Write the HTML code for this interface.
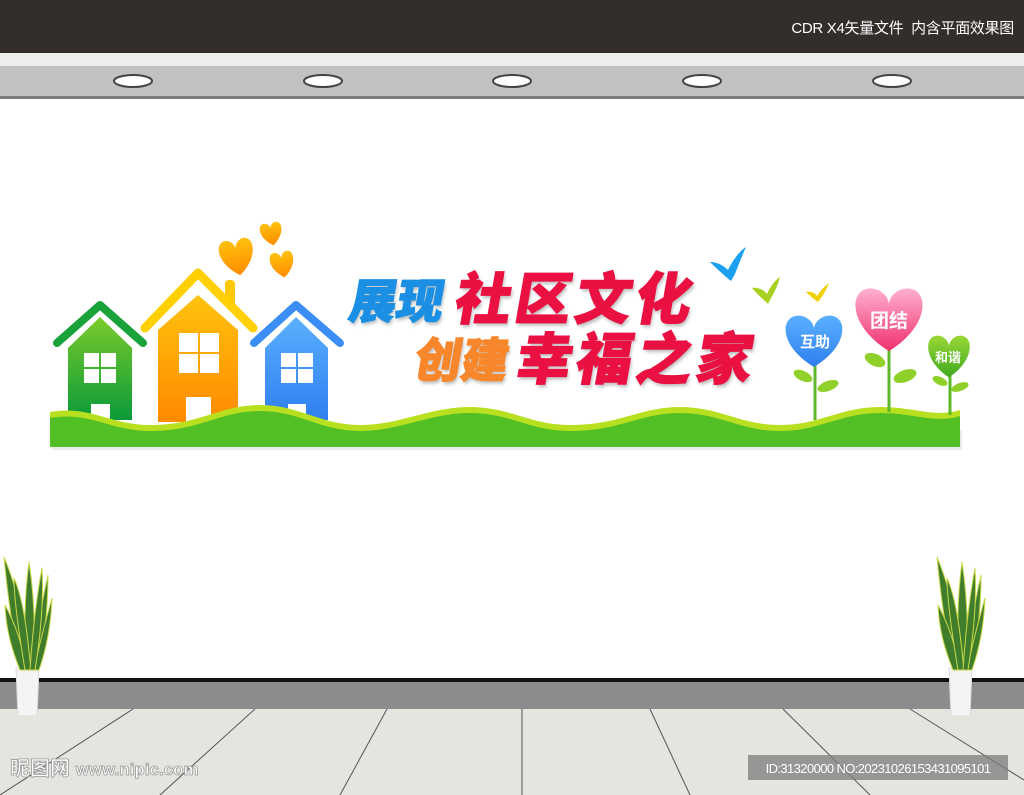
<!DOCTYPE html>
<html><head><meta charset="utf-8"><style>
*{margin:0;padding:0}
body{width:1024px;height:795px;position:relative;overflow:hidden;background:#fff;font-family:"Liberation Sans","Noto Sans CJK SC",sans-serif}
.t{position:absolute;white-space:nowrap;font-family:"Liberation Sans","Noto Sans CJK SC",sans-serif;font-weight:900;transform:skewX(-10deg);text-shadow:2px 3px 3px rgba(0,0,0,.25);line-height:1;-webkit-text-stroke:1.2px currentColor}
</style></head><body>
<div style="position:absolute;left:0;top:0;width:1024px;height:53px;background:#332d2b"></div>
<div style="position:absolute;right:10px;top:17px;color:#fff;font-size:15px;letter-spacing:-0.3px">CDR X4矢量文件&nbsp; 内含平面效果图</div>
<div style="position:absolute;left:0;top:53px;width:1024px;height:13px;background:#eceeed"></div>
<div style="position:absolute;left:0;top:66px;width:1024px;height:31px;background:#c1c1c1"></div>
<div style="position:absolute;left:0;top:96px;width:1024px;height:3px;background:#7a7a7a"></div>
<svg style="position:absolute;left:0;top:0" width="1024" height="795">
<g fill="#fff" stroke="#444" stroke-width="2">
<ellipse cx="133" cy="81" rx="19" ry="6"/><ellipse cx="323" cy="81" rx="19" ry="6"/><ellipse cx="512" cy="81" rx="19" ry="6"/><ellipse cx="702" cy="81" rx="19" ry="6"/><ellipse cx="892" cy="81" rx="19" ry="6"/></g>
<rect x="0" y="678" width="1024" height="4" fill="#111"/>
<rect x="0" y="682" width="1024" height="27" fill="#8c8c8c"/>
<rect x="0" y="709" width="1024" height="86" fill="#e3e6df"/>
<g stroke="#555" stroke-width="1">
<line x1="133" y1="709" x2="0" y2="795"/><line x1="255" y1="709" x2="160" y2="795"/><line x1="387" y1="709" x2="340" y2="795"/><line x1="522" y1="709" x2="522" y2="795"/><line x1="650" y1="709" x2="690" y2="795"/><line x1="783" y1="709" x2="870" y2="795"/><line x1="910" y1="709" x2="1024" y2="780"/></g>
<defs>
<linearGradient id="gg" x1="0" y1="0" x2="0" y2="1"><stop offset="0" stop-color="#7acb2a"/><stop offset="1" stop-color="#0a9a3a"/></linearGradient>
<linearGradient id="og" x1="0" y1="0" x2="0" y2="1"><stop offset="0" stop-color="#ffc20e"/><stop offset="1" stop-color="#ff8a00"/></linearGradient>
<linearGradient id="bg" x1="0" y1="0" x2="0" y2="1"><stop offset="0" stop-color="#5ab0ff"/><stop offset="1" stop-color="#2f7ff0"/></linearGradient>
<linearGradient id="pg" x1="0" y1="0" x2="0" y2="1"><stop offset="0" stop-color="#ffb0d0"/><stop offset="1" stop-color="#f0306e"/></linearGradient>
<linearGradient id="lg" x1="0" y1="0" x2="0" y2="1"><stop offset="0" stop-color="#9ad836"/><stop offset="1" stop-color="#3ea820"/></linearGradient>
<path id="heart" d="M0,14 C-30,-2 -28,-24 -13,-24 C-6,-24 0,-19 0,-14 C0,-19 6,-24 13,-24 C28,-24 30,-2 0,14Z"/>
</defs>
<g stroke="#19a23a" stroke-width="8" stroke-linecap="round" stroke-linejoin="round" fill="none"><path d="M57,343 L100,305 L143,343"/></g>
<path d="M68,348 L100,317 L132,348 L132,420 L68,420Z" fill="url(#gg)"/>
<g fill="#fff"><rect x="84" y="353" width="15" height="14"/><rect x="101" y="353" width="15" height="14"/><rect x="84" y="369" width="15" height="14"/><rect x="101" y="369" width="15" height="14"/><rect x="91" y="404" width="19" height="18"/></g>
<rect x="225" y="280" width="10" height="28" rx="4" fill="#ffc800"/>
<g stroke="#ffd000" stroke-width="9" stroke-linecap="round" stroke-linejoin="round" fill="none"><path d="M145,328 L198,273 L253,328"/></g>
<path d="M158,330 L198,295 L238,330 L238,422 L158,422Z" fill="url(#og)"/>
<g fill="#fff"><rect x="179" y="333" width="19" height="19"/><rect x="200" y="333" width="19" height="19"/><rect x="179" y="354" width="19" height="19"/><rect x="200" y="354" width="19" height="19"/><rect x="186" y="397" width="25" height="25"/></g>
<g stroke="#3b8ef5" stroke-width="8" stroke-linecap="round" stroke-linejoin="round" fill="none"><path d="M254,343 L296,305 L340,343"/></g>
<path d="M265,348 L296,317 L328,348 L328,420 L265,420Z" fill="url(#bg)"/>
<g fill="#fff"><rect x="281" y="353" width="15" height="14"/><rect x="298" y="353" width="15" height="14"/><rect x="281" y="369" width="15" height="14"/><rect x="298" y="369" width="15" height="14"/><rect x="288" y="404" width="18" height="18"/></g>
<g fill="url(#og)"><use href="#heart" transform="translate(238,262) rotate(-10) scale(0.72,0.95)"/><use href="#heart" transform="translate(272,237) rotate(-10) scale(0.46,0.6)"/><use href="#heart" transform="translate(283,268) rotate(-10) scale(0.5,0.68)"/></g>
<rect x="52" y="430" width="910" height="20" fill="#000" opacity=".08"/>
<path d="M50,412 C90,405 110,425 150,425 C200,425 220,405 260,405 C300,405 320,425 360,425 C400,425 430,407 470,407 C510,407 530,425 570,425 C620,425 640,407 680,407 C720,407 740,425 780,425 C820,425 840,407 880,407 C915,407 935,418 960,410 L960,447 L50,447Z" fill="#b8e020"/>
<path d="M50,418 C90,411 110,431 150,431 C200,431 220,411 260,411 C300,411 320,431 360,431 C400,431 430,413 470,413 C510,413 530,431 570,431 C620,431 640,413 680,413 C720,413 740,431 780,431 C820,431 840,413 880,413 C915,413 935,424 960,416 L960,447 L50,447Z" fill="#52bf24"/>
<g stroke="#5cb82a" stroke-width="3" fill="none"><line x1="815" y1="360" x2="815" y2="420"/><line x1="889" y1="345" x2="889" y2="412"/><line x1="950" y1="370" x2="950" y2="415"/></g>
<g fill="#8fd12a"><ellipse cx="803" cy="376" rx="10" ry="5" transform="rotate(25 803 376)"/><ellipse cx="828" cy="386" rx="11" ry="5" transform="rotate(-20 828 386)"/><ellipse cx="875" cy="360" rx="11" ry="6" transform="rotate(25 875 360)"/><ellipse cx="905" cy="376" rx="12" ry="6" transform="rotate(-20 905 376)"/><ellipse cx="940" cy="381" rx="8" ry="4" transform="rotate(25 940 381)"/><ellipse cx="960" cy="387" rx="9" ry="4" transform="rotate(-20 960 387)"/></g>
<use href="#heart" fill="url(#bg)" transform="translate(814,348) scale(1.2,1.35)"/>
<use href="#heart" fill="url(#pg)" transform="translate(889,328) scale(1.42,1.65)"/>
<use href="#heart" fill="url(#lg)" transform="translate(949,362) scale(0.88,1.1)"/>
<g font-family="Liberation Sans,Noto Sans CJK SC,sans-serif" font-weight="bold" fill="#fff" text-anchor="middle"><text x="815" y="347" font-size="15">互助</text><text x="889" y="327" font-size="19">团结</text><text x="948" y="362" font-size="13">和谐</text></g>
<g fill="#1ea0f0"><path d="M710,262 C718,262 724,266 728,270 C732,262 738,252 746,247 C742,256 738,266 735,274 L731,281 C726,277 718,270 710,262Z"/></g>
<g fill="#a8d020"><path d="M752,288 C758,287 764,290 767,294 C770,287 775,280 780,277 C778,285 774,293 771,298 L768,304 C764,300 757,294 752,288Z"/></g>
<g fill="#f0d000"><path d="M806,292 C811,291 815,293 817,296 C820,291 825,286 829,283 C826,290 823,296 820,299 L818,302 C814,299 810,296 806,292Z"/></g>
<g id="plant">
<path d="M16,668 L39,668 L37,716 L18,716Z" fill="#f4f4f4" stroke="#ddd"/>
<g fill="#3f7d2c" stroke="#c9d84a" stroke-width="1">
<path d="M22,670 C14,640 8,600 4,557 C18,590 26,630 30,670Z"/>
<path d="M27,670 C24,630 24,600 29,562 C35,600 35,640 33,670Z"/>
<path d="M32,670 C36,640 40,610 48,575 C48,610 44,645 37,670Z"/>
<path d="M20,670 C12,650 6,630 5,605 C16,625 22,645 27,670Z"/>
<path d="M34,670 C40,640 46,620 52,598 C51,625 46,650 39,670Z"/>
<path d="M25,670 C20,640 14,600 14,578 C24,600 28,640 31,670Z"/>
<path d="M30,670 C32,640 36,600 42,568 C44,600 40,640 35,670Z"/>
</g></g>
<use href="#plant" transform="translate(933,0)"/>
<rect x="748" y="755" width="260" height="25" fill="#7c7c7c" opacity=".75"/>
<text x="878" y="773" fill="#fff" font-size="13" text-anchor="middle" font-family="Liberation Sans,sans-serif" letter-spacing="-0.6">ID:31320000 NO:20231026153431095101</text>
<text x="10" y="775" fill="#fff" stroke="#999" stroke-width="0.8" font-size="20" font-weight="bold" font-family="Liberation Sans,Noto Sans CJK SC,sans-serif">昵图网 <tspan font-size="17">www.nipic.com</tspan></text>
</svg>
<div class="t" style="left:350px;top:278px;font-size:47px;color:#1b8fe3">展现</div>
<div class="t" style="left:456px;top:272px;font-size:56px;color:#ea1142;letter-spacing:4px">社区文化</div>
<div class="t" style="left:415px;top:337px;font-size:47px;color:#f7872a">创建</div>
<div class="t" style="left:517px;top:332px;font-size:56px;color:#ea1142;letter-spacing:4px">幸福之家</div>
</body></html>
